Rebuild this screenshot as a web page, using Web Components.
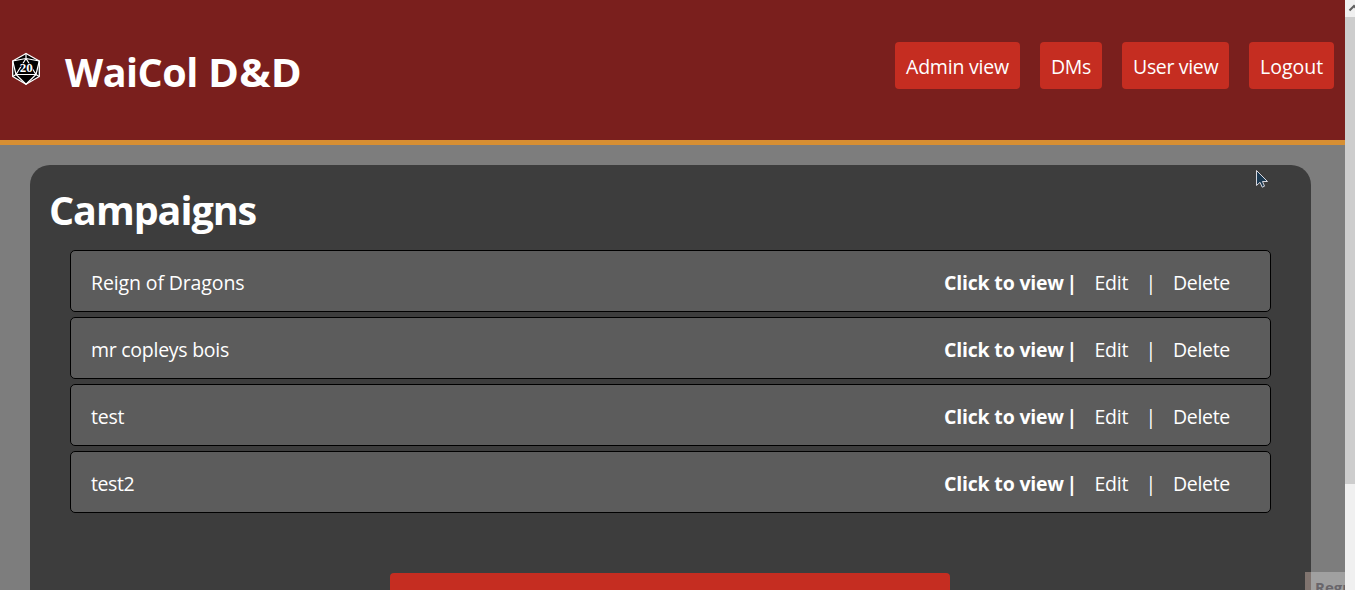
<!DOCTYPE html>
<html lang="en">
<head>
<meta charset="utf-8">
<title>WaiCol D&amp;D</title>
<style>
html,body{margin:0;height:100%;overflow:hidden}
body{font:19.5px/27px "Open Sans","Noto Sans",sans-serif;color:#fff;background:#7d7d7d}
</style>
</head>
<body>
<app-shell></app-shell>
<script>
const define = (name, html, init) => customElements.define(name, class extends HTMLElement {
  connectedCallback() {
    if (this.shadowRoot) return;
    this.attachShadow({mode:'open'}).innerHTML = html;
    if (init) init(this, this.shadowRoot);
  }
});

// Text of a set advance width: the tracking is spread over its characters.
define('fit-text', `<style>:host{display:block;white-space:pre}span{display:inline-block;white-space:pre}</style><span><slot></slot></span>`, (el, root) => {
  const w = +el.getAttribute('w'), s = root.querySelector('span');
  el.style.width = w + 'px';
  s.style.letterSpacing = (w - s.offsetWidth) / el.textContent.length + 'px';
});

define('d20-logo', `<style>:host{display:block;width:30px;height:34px}svg{display:block}text{font:bold 13px "Liberation Serif",serif}</style>
<svg width="30" height="34" viewBox="0 0 30 34"><path d="M15 1.5 28.3 9v15.500L15 32.300 1.700 24.500V9Z" fill="#000" stroke="#fff" stroke-width="1.300" stroke-linejoin="round"/>
<path d="M15 1.500V6.500M15 6.500 5 22.500H25ZM15 6.500 1.700 9 5 22.500 1.700 24.500M15 6.500 28.300 9 25 22.500 28.300 24.500M5 22.500 15 32.300 25 22.500" fill="none" stroke="#fff" stroke-width="1.200" stroke-linejoin="round"/>
<text x="15.200" y="20.300" text-anchor="middle" fill="#fff" stroke="#000" stroke-width="1.500" paint-order="stroke">20</text></svg>`);

define('nav-button', `<style>:host{display:block;box-sizing:border-box;height:47px;padding:11px 11px 9px;border-radius:4px;background:#c52d21}</style><slot></slot>`);

define('site-header', `<style>
:host{display:flex;box-sizing:border-box;height:145px;background:#7a1f1d;border-bottom:5px solid #d78f33;padding:0 11px}
d20-logo{margin-top:52px}
.title{display:flex;font-size:39.500px;font-weight:700;line-height:54px;margin:45px 0 0 24px}
.dd{transform:scaleX(1.06);transform-origin:left}
nav{display:flex;gap:20px;margin:42px 0 0 auto}
</style>
<d20-logo></d20-logo><div class="title"><fit-text w="142.500">WaiCol </fit-text><fit-text class="dd" w="88.500">D&amp;D</fit-text></div>
<nav><nav-button><fit-text w="103">Admin view</fit-text></nav-button><nav-button><fit-text w="40">DMs</fit-text></nav-button><nav-button><fit-text w="85">User view</fit-text></nav-button><nav-button><fit-text w="63">Logout</fit-text></nav-button></nav>`);

define('campaign-row', `<style>
:host{display:flex;box-sizing:border-box;height:62px;border:1px solid #000;border-radius:5px;background:#5c5c5c;padding:18px 40px 0 20px}
b{display:flex;gap:3px;margin-left:auto}.edit{margin-left:21px}.bar{margin-left:17px}.del{margin-left:17.500px}
</style><slot></slot><b><fit-text w="119.500">Click to view</fit-text><fit-text w="7">|</fit-text></b><fit-text class="edit" w="34">Edit</fit-text><fit-text class="bar" w="10">|</fit-text><fit-text class="del" w="57">Delete</fit-text>`);

define('campaign-panel', `<style>
:host{display:flex;flex-direction:column;box-sizing:border-box;height:600px;margin:20px 34px 0 30px;padding:18px 40px 0;border-radius:20px;background:#3d3d3d}
.heading{font-size:39.500px;font-weight:700;line-height:54px;margin:0 0 13px -21px}
.rows{display:flex;flex-direction:column;gap:5px}
.add{height:60px;width:560px;border-radius:4px;background:#c52d21;margin:60px 0 0 320px}
</style><fit-text class="heading" w="207.500">Campaigns</fit-text>
<div class="rows"><campaign-row><fit-text w="153">Reign of Dragons</fit-text></campaign-row><campaign-row><fit-text w="138">mr copleys bois</fit-text></campaign-row><campaign-row><fit-text w="33">test</fit-text></campaign-row><campaign-row><fit-text w="43">test2</fit-text></campaign-row></div><div class="add"></div>`);

define('scroll-bar', `<style>:host{display:flex;flex-direction:column;width:10px;overflow:hidden;background:#f0f0f0}
svg{display:block;flex:none}.thumb{height:467px;background:#cdcdcd}</style>
<svg width="10" height="17" viewBox="0 0 10 17"><path d="M4.500 10.500 9 6l4.500 4.500" fill="none" stroke="#606060" stroke-width="2"/></svg><div class="thumb"></div>`);

define('app-shell', `<style>
:host{display:grid;grid-template-columns:1fr 10px;width:100%;height:590px;overflow:hidden;position:relative}
main{overflow:hidden;position:relative;min-width:0}
.chip{position:absolute;left:1305px;top:572px;width:40px;height:18px;overflow:hidden;background:linear-gradient(90deg,#80746f 0 6px,#a0a0a0 6px)}
.chip span{display:block;margin:5px 0 0 10px;font:bold 15px/20px "Open Sans",sans-serif;color:#69666b;white-space:nowrap}
.cursor{position:absolute;left:1256px;top:169px}
</style><main><site-header></site-header><campaign-panel></campaign-panel>
<div class="chip"><span>Regu</span></div>
<svg class="cursor" width="13" height="20" viewBox="0 0 13 20"><path d="M.500 1.500V16.500L4 13.300 6.200 18.200 8.500 17.200 6.500 12.500H11.500Z" fill="#1c3a52" stroke="#d8d8e0"/></svg></main><scroll-bar></scroll-bar>`);
</script>
</body>
</html>
